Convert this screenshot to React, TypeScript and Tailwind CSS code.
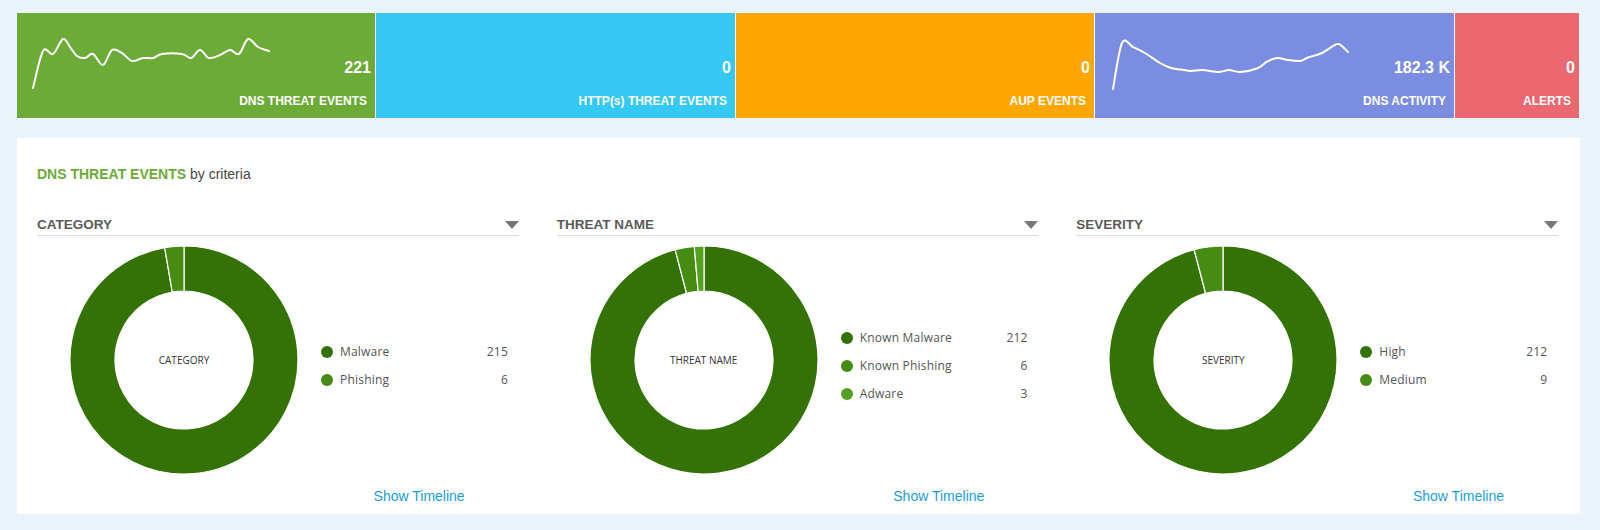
import React from 'react';

type Pt = [number, number];

interface Tile {
  label: string;
  value: string;
  color: string;
  spark?: Pt[];
}

interface Slice {
  name: string;
  count: number;
  color: string;
}

interface Criteria {
  title: string;
  slices: Slice[];
}

const DNS_THREAT_SPARK: Pt[] = [
  [16, 75], [26, 38], [36, 41], [46, 26], [53, 34], [60, 43], [68, 45], [76, 41], [86, 52],
  [95, 37], [105, 40], [115, 48], [126, 45], [136, 45], [145, 41], [165, 41], [174, 45],
  [183, 37], [192, 45], [203, 42], [213, 37], [222, 41], [231, 26], [241, 34], [252, 38],
];

const DNS_ACTIVITY_SPARK: Pt[] = [
  [18, 76], [27, 30], [38, 34], [50, 40], [65, 50], [76, 55], [86, 56.5], [96, 58], [107, 57],
  [124, 59], [134, 57], [145, 59], [162, 55.5], [172, 48.6], [182, 45], [193, 47], [205, 48],
  [213, 44.5], [227, 40], [241, 31.4], [246, 32.4], [253, 39],
];

const TILES: Tile[] = [
  { label: 'DNS THREAT EVENTS', value: '221', color: 'bg-[#6cab37]', spark: DNS_THREAT_SPARK },
  { label: 'HTTP(s) THREAT EVENTS', value: '0', color: 'bg-[#35c8f2]' },
  { label: 'AUP EVENTS', value: '0', color: 'bg-[#ffa600]' },
  { label: 'DNS ACTIVITY', value: '182.3 K', color: 'bg-[#7b8de1]', spark: DNS_ACTIVITY_SPARK },
  { label: 'ALERTS', value: '0', color: 'bg-[#ec6870]' },
];

const DARK = '#357205';
const MID = '#468c14';
const LIGHT = '#55a020';

const CRITERIA: Criteria[] = [
  {
    title: 'CATEGORY',
    slices: [
      { name: 'Malware', count: 215, color: DARK },
      { name: 'Phishing', count: 6, color: MID },
    ],
  },
  {
    title: 'THREAT NAME',
    slices: [
      { name: 'Known Malware', count: 212, color: DARK },
      { name: 'Known Phishing', count: 6, color: MID },
      { name: 'Adware', count: 3, color: LIGHT },
    ],
  },
  {
    title: 'SEVERITY',
    slices: [
      { name: 'High', count: 212, color: DARK },
      { name: 'Medium', count: 9, color: MID },
    ],
  },
];

// catmull-rom -> cubic bezier, good enough for a sparkline
function smoothPath(pts: Pt[]) {
  let d = `M${pts[0][0]},${pts[0][1]}`;
  for (let i = 0; i < pts.length - 1; i++) {
    const p0 = pts[i - 1] || pts[i];
    const p1 = pts[i];
    const p2 = pts[i + 1];
    const p3 = pts[i + 2] || p2;
    const c1x = p1[0] + (p2[0] - p0[0]) / 6;
    const c1y = p1[1] + (p2[1] - p0[1]) / 6;
    const c2x = p2[0] - (p3[0] - p1[0]) / 6;
    const c2y = p2[1] - (p3[1] - p1[1]) / 6;
    d += ` C${c1x.toFixed(1)},${c1y.toFixed(1)} ${c2x.toFixed(1)},${c2y.toFixed(1)} ${p2[0]},${p2[1]}`;
  }
  return d;
}

function arcPath(cx: number, cy: number, R: number, r: number, a0: number, a1: number) {
  const pt = (rad: number, a: number) => {
    const t = ((a - 90) * Math.PI) / 180;
    return `${(cx + rad * Math.cos(t)).toFixed(2)},${(cy + rad * Math.sin(t)).toFixed(2)}`;
  };
  const large = a1 - a0 > 180 ? 1 : 0;
  return [
    `M${pt(R, a0)}`,
    `A${R},${R} 0 ${large} 1 ${pt(R, a1)}`,
    `L${pt(r, a1)}`,
    `A${r},${r} 0 ${large} 0 ${pt(r, a0)}`,
    'Z',
  ].join(' ');
}

function Donut({ slices, label }: { slices: Slice[]; label: string }) {
  const total = slices.reduce((s, x) => s + x.count, 0);
  let start = 0;
  return (
    <div className="relative w-[228px] h-[228px] shrink-0">
      <svg width="228" height="228" viewBox="0 0 228 228">
        {slices.map(s => {
          const end = start + (s.count / total) * 360;
          const d = arcPath(114, 114, 114, 69, start, end);
          start = end;
          return <path key={s.name} d={d} fill={s.color} stroke="#ffffff" strokeWidth="1.2" />;
        })}
      </svg>
      <div className="absolute inset-0 flex items-center justify-center">
        <span className="text-[10px] text-[#333] font-['Open_Sans',sans-serif]">{label}</span>
      </div>
    </div>
  );
}

export default function App() {
  return (
    <div className="min-h-[530px] bg-[#eaf2fc] pt-[13px] pl-[17px] font-['Liberation_Sans',Arial,sans-serif]">
      {/* Summary tiles */}
      <div className="w-[1562px] grid grid-cols-[358px_359px_358px_359px_124px] gap-px bg-white">
        {TILES.map(t => (
          <div key={t.label} className={`relative h-[105px] ${t.color} flex flex-col items-end justify-end pb-[10px] text-white font-bold`}>
            {t.spark && (
              <svg className="absolute left-0 top-0" width="300" height="105" viewBox="0 0 300 105">
                <path d={smoothPath(t.spark)} fill="none" stroke="#ffffff" strokeWidth="2" strokeLinecap="round" />
              </svg>
            )}
            <span className="relative text-[16px] leading-[18px] pr-[4px] mb-[17px]">{t.value}</span>
            <span className="relative text-[12px] leading-[14px] pr-[8px]">{t.label}</span>
          </div>
        ))}
      </div>

      {/* Criteria panel */}
      <div className="w-[1563px] mt-[20px] bg-white pt-[28px] pl-[20px] pr-[22px] pb-[6px]">
        <p className="text-[14px] leading-[16px]">
          <span className="font-bold text-[#6cab37]">DNS THREAT EVENTS</span>
          <span className="text-[#444]"> by criteria</span>
        </p>

        <div className="grid grid-cols-3 gap-[38px] mt-[34px]">
          {CRITERIA.map(c => (
            <div key={c.title} className="flex flex-col">
              <div className="flex items-center justify-between border-b border-[#d8dbe0] pb-[2px] h-[20px]">
                <span className="text-[13.5px] leading-[16px] font-bold text-[#5a5a5a]">{c.title}</span>
                <span className="w-0 h-0 border-l-[7.5px] border-r-[7.5px] border-t-[8px] border-l-transparent border-r-transparent border-t-[#777]" />
              </div>

              <div className="flex items-center mt-[10px] pl-[33px]">
                <Donut slices={c.slices} label={c.title} />
                <ul className="ml-[23px] w-[187px] mt-[12px] font-['Open_Sans',sans-serif] text-[12px] text-[#555] tracking-[0.2px]">
                  {c.slices.map(s => (
                    <li key={s.name} className="flex items-center h-[28px]">
                      <span className="w-[12px] h-[12px] rounded-full shrink-0" style={{ backgroundColor: s.color }} />
                      <span className="ml-[7px] flex-1">{s.name}</span>
                      <span>{s.count}</span>
                    </li>
                  ))}
                </ul>
              </div>

              <div className="mt-[10px] pr-[54px] text-right">
                <a className="text-[14px] leading-[16px] text-[#1a9edb] cursor-pointer">Show Timeline</a>
              </div>
            </div>
          ))}
        </div>
      </div>
    </div>
  );
}
